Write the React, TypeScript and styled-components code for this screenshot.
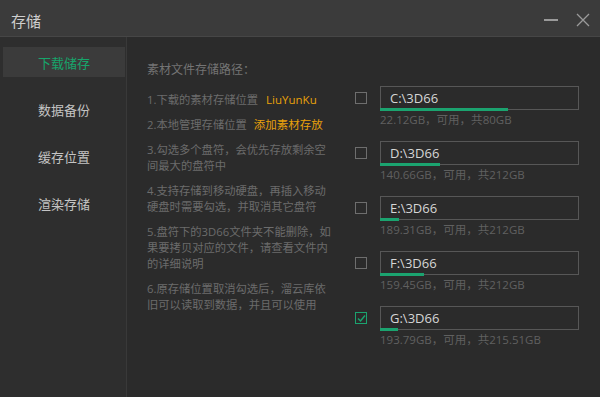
import React from 'react';
import styled, { createGlobalStyle } from 'styled-components';

const GlobalStyle = createGlobalStyle`
  html, body {
    margin: 0;
    padding: 0;
    background: #2b2b2b;
  }
  * {
    box-sizing: border-box;
  }
`;

const FONT = `"Open Sans", "Noto Sans CJK SC", sans-serif`;

const menuItems = ['下载储存', '数据备份', '缓存位置', '渲染存储'];

const drives = [
  { path: 'C:\\3D66', free: '22.12', total: '80', checked: false },
  { path: 'D:\\3D66', free: '140.66', total: '212', checked: false },
  { path: 'E:\\3D66', free: '189.31', total: '212', checked: false },
  { path: 'F:\\3D66', free: '159.45', total: '212', checked: false },
  { path: 'G:\\3D66', free: '193.79', total: '215.51', checked: true },
];

function App() {
  return (
    <Window>
      <GlobalStyle />
      <TitleBar>
        <Title>存储</Title>
        <TitleButtons>
          <MinButton />
          <CloseButton>
            <svg width="14" height="14" viewBox="0 0 14 14">
              <path d="M1 1 L13 13 M13 1 L1 13" stroke="#9a9a9a" strokeWidth="1.3" fill="none" />
            </svg>
          </CloseButton>
        </TitleButtons>
      </TitleBar>
      <Body>
        <Sidebar>
          {menuItems.map((m, i) => (
            <MenuItem key={m} $active={i === 0}>{m}</MenuItem>
          ))}
        </Sidebar>
        <Main>
          <Notes>
            <Heading>素材文件存储路径：</Heading>
            <Note>1.下载的素材存储位置<Accent $gap={8}>LiuYunKu</Accent></Note>
            <Note>2.本地管理存储位置<Accent $gap={7}>添加素材存放</Accent></Note>
            <Note>3.勾选多个盘符，会优先存放剩余空间最大的盘符中</Note>
            <Note>4.支持存储到移动硬盘，再插入移动硬盘时需要勾选，并取消其它盘符</Note>
            <Note>5.盘符下的3D66文件夹不能删除，如果要拷贝对应的文件，请查看文件内的详细说明</Note>
            <Note>6.原存储位置取消勾选后，溜云库依旧可以读取到数据，并且可以使用</Note>
          </Notes>
          <DriveList>
            {drives.map((d) => {
              const used = 1 - parseFloat(d.free) / parseFloat(d.total);
              return (
                <DriveRow key={d.path}>
                  <CheckBox $checked={d.checked}>
                    {d.checked && (
                      <svg width="9" height="9" viewBox="0 0 9 9">
                        <path d="M1 4.5 L3.5 7 L8 1.5" stroke="#1ba36f" strokeWidth="1.5" fill="none" />
                      </svg>
                    )}
                  </CheckBox>
                  <DriveInfo>
                    <PathBox>
                      {d.path}
                      <UsageBar style={{ width: `${used * 90}%` }} />
                    </PathBox>
                    <SpaceText>{d.free}GB，可用，共{d.total}GB</SpaceText>
                  </DriveInfo>
                </DriveRow>
              );
            })}
          </DriveList>
        </Main>
      </Body>
    </Window>
  );
}

export default App;

const Window = styled.div`
  width: 600px;
  height: 397px;
  display: flex;
  flex-direction: column;
  background: #2b2b2b;
  font-family: ${FONT};
  overflow: hidden;
`;

const TitleBar = styled.div`
  height: 37px;
  flex-shrink: 0;
  display: flex;
  align-items: center;
  justify-content: space-between;
  padding: 4px 10px 0 11px;
  background: #3b3b3b;
  border-bottom: 1px solid #464646;
`;

const Title = styled.div`
  font-size: 15px;
  color: #cfcfcf;
`;

const TitleButtons = styled.div`
  display: flex;
  align-items: center;
  gap: 18px;
`;

const MinButton = styled.div`
  width: 14px;
  height: 1.5px;
  background: #9a9a9a;
`;

const CloseButton = styled.div`
  display: flex;
  width: 14px;
  height: 14px;
`;

const Body = styled.div`
  flex: 1;
  display: flex;
`;

const Sidebar = styled.div`
  width: 127px;
  flex-shrink: 0;
  padding: 10px 1px 0 3px;
  background: #2e2e2e;
  border-right: 1px solid #393939;
  display: flex;
  flex-direction: column;
  gap: 17px;
`;

const MenuItem = styled.div<{ $active?: boolean }>`
  height: 30px;
  display: flex;
  align-items: center;
  justify-content: center;
  font-size: 13px;
  color: ${(p) => (p.$active ? '#17a56b' : '#c4c4c4')};
  background: ${(p) => (p.$active ? '#3b3b3b' : 'transparent')};
`;

const Main = styled.div`
  flex: 1;
  display: flex;
  padding-left: 20px;
`;

const Notes = styled.div`
  width: 188px;
  padding-top: 25px;
  flex-shrink: 0;
`;

const Heading = styled.div`
  font-size: 12px;
  line-height: 16px;
  color: #747474;
  margin-bottom: 14px;
`;

const Note = styled.div`
  font-size: 11.3px;
  line-height: 16px;
  color: #6c6c6c;
  margin-bottom: 9px;
`;

const Accent = styled.span<{ $gap: number }>`
  margin-left: ${(p) => p.$gap}px;
  color: #e8a10a;
  font-size: 11.5px;
`;

const DriveList = styled.div`
  padding: 49px 0 0 20px;
  display: flex;
  flex-direction: column;
  gap: 13px;
`;

const DriveRow = styled.div`
  display: flex;
  align-items: flex-start;
`;

const CheckBox = styled.div<{ $checked?: boolean }>`
  width: 12px;
  height: 12px;
  margin-top: 6px;
  margin-right: 13px;
  border: 1px solid ${(p) => (p.$checked ? '#1ba36f' : '#6e6e6e')};
  display: flex;
  align-items: center;
  justify-content: center;
`;

const DriveInfo = styled.div`
  display: flex;
  flex-direction: column;
`;

const PathBox = styled.div`
  position: relative;
  width: 199px;
  height: 24px;
  border: 1px solid #575757;
  background: #2b2b2b;
  padding-left: 9px;
  font-size: 13px;
  line-height: 22px;
  color: #d6d6d6;
`;

const UsageBar = styled.div`
  position: absolute;
  left: -1px;
  bottom: -2px;
  height: 3px;
  background: #1ba36f;
`;

const SpaceText = styled.div`
  margin-top: 2px;
  font-size: 11.5px;
  line-height: 16px;
  color: #606060;
`;
